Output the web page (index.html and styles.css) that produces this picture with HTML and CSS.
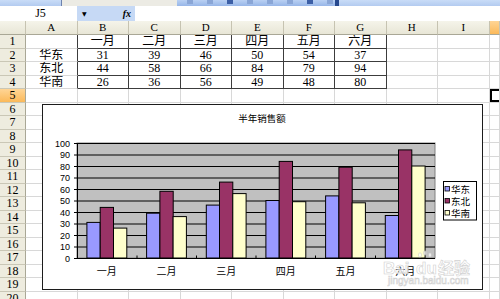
FILE: index.html
```html
<!DOCTYPE html>
<html lang="zh">
<head>
<meta charset="utf-8">
<link rel="stylesheet" href="styles.css">
</head>
<body>
<div class="toolbar">
  <div class="tb-gap"></div>
  <div class="tb-box"></div>
  <div class="tb-icons"><span class="ic"></span><span class="ic"></span><span class="ic dk"></span><span class="ic"></span><span class="ic"></span><span class="ic"></span><span class="ic dk"></span><span class="ic"></span></div>
  <div class="tb-end"></div>
</div>
<div class="formula">
  <div class="namebox">J5</div>
  <div class="fxzone"><span class="arrow">▼</span><span class="fx">fx</span></div>
  <div class="finput"></div>
</div>
<div class="sheet">
  <div class="ch corner"></div><div class="ch">A</div><div class="ch">B</div><div class="ch">C</div><div class="ch">D</div><div class="ch">E</div><div class="ch">F</div><div class="ch">G</div><div class="ch">H</div><div class="ch">I</div><div class="ch sel"></div>

  <div class="rh">1</div><div class="c ta"></div><div class="c t">一月</div><div class="c t">二月</div><div class="c t">三月</div><div class="c t">四月</div><div class="c t">五月</div><div class="c t">六月</div><div class="c"></div><div class="c"></div><div class="c"></div>
  <div class="rh">2</div><div class="c ta">华东</div><div class="c t">31</div><div class="c t">39</div><div class="c t">46</div><div class="c t">50</div><div class="c t">54</div><div class="c t">37</div><div class="c"></div><div class="c"></div><div class="c"></div>
  <div class="rh">3</div><div class="c ta">东北</div><div class="c t">44</div><div class="c t">58</div><div class="c t">66</div><div class="c t">84</div><div class="c t">79</div><div class="c t">94</div><div class="c"></div><div class="c"></div><div class="c"></div>
  <div class="rh">4</div><div class="c ta">华南</div><div class="c t">26</div><div class="c t">36</div><div class="c t">56</div><div class="c t">49</div><div class="c t">48</div><div class="c t">80</div><div class="c"></div><div class="c"></div><div class="c"></div>
  <div class="rh sel">5</div><div class="c"></div><div class="c"></div><div class="c"></div><div class="c"></div><div class="c"></div><div class="c"></div><div class="c"></div><div class="c"></div><div class="c"></div><div class="c cur"></div>
  <div class="rh">6</div><div class="c"></div><div class="c"></div><div class="c"></div><div class="c"></div><div class="c"></div><div class="c"></div><div class="c"></div><div class="c"></div><div class="c"></div><div class="c"></div>
  <div class="rh">7</div><div class="c"></div><div class="c"></div><div class="c"></div><div class="c"></div><div class="c"></div><div class="c"></div><div class="c"></div><div class="c"></div><div class="c"></div><div class="c"></div>
  <div class="rh">8</div><div class="c"></div><div class="c"></div><div class="c"></div><div class="c"></div><div class="c"></div><div class="c"></div><div class="c"></div><div class="c"></div><div class="c"></div><div class="c"></div>
  <div class="rh">9</div><div class="c"></div><div class="c"></div><div class="c"></div><div class="c"></div><div class="c"></div><div class="c"></div><div class="c"></div><div class="c"></div><div class="c"></div><div class="c"></div>
  <div class="rh">10</div><div class="c"></div><div class="c"></div><div class="c"></div><div class="c"></div><div class="c"></div><div class="c"></div><div class="c"></div><div class="c"></div><div class="c"></div><div class="c"></div>
  <div class="rh">11</div><div class="c"></div><div class="c"></div><div class="c"></div><div class="c"></div><div class="c"></div><div class="c"></div><div class="c"></div><div class="c"></div><div class="c"></div><div class="c"></div>
  <div class="rh">12</div><div class="c"></div><div class="c"></div><div class="c"></div><div class="c"></div><div class="c"></div><div class="c"></div><div class="c"></div><div class="c"></div><div class="c"></div><div class="c"></div>
  <div class="rh">13</div><div class="c"></div><div class="c"></div><div class="c"></div><div class="c"></div><div class="c"></div><div class="c"></div><div class="c"></div><div class="c"></div><div class="c"></div><div class="c"></div>
  <div class="rh">14</div><div class="c"></div><div class="c"></div><div class="c"></div><div class="c"></div><div class="c"></div><div class="c"></div><div class="c"></div><div class="c"></div><div class="c"></div><div class="c"></div>
  <div class="rh">15</div><div class="c"></div><div class="c"></div><div class="c"></div><div class="c"></div><div class="c"></div><div class="c"></div><div class="c"></div><div class="c"></div><div class="c"></div><div class="c"></div>
  <div class="rh">16</div><div class="c"></div><div class="c"></div><div class="c"></div><div class="c"></div><div class="c"></div><div class="c"></div><div class="c"></div><div class="c"></div><div class="c"></div><div class="c"></div>
  <div class="rh">17</div><div class="c"></div><div class="c"></div><div class="c"></div><div class="c"></div><div class="c"></div><div class="c"></div><div class="c"></div><div class="c"></div><div class="c"></div><div class="c"></div>
  <div class="rh">18</div><div class="c"></div><div class="c"></div><div class="c"></div><div class="c"></div><div class="c"></div><div class="c"></div><div class="c"></div><div class="c"></div><div class="c"></div><div class="c"></div>
  <div class="rh">19</div><div class="c"></div><div class="c"></div><div class="c"></div><div class="c"></div><div class="c"></div><div class="c"></div><div class="c"></div><div class="c"></div><div class="c"></div><div class="c"></div>
  <div class="rh">20</div><div class="c"></div><div class="c"></div><div class="c"></div><div class="c"></div><div class="c"></div><div class="c"></div><div class="c"></div><div class="c"></div><div class="c"></div><div class="c"></div>
</div>

<div class="chart">
  <svg class="chart-svg" width="439" height="184" viewBox="43 105 439 184" xmlns="http://www.w3.org/2000/svg">
    <text class="title" x="262" y="122" text-anchor="middle">半年销售额</text>
    <rect x="77" y="143" width="358" height="115" fill="#c0c0c0" stroke="#808080" stroke-width="1"/>
    <g stroke="#000" stroke-width="1">
      <line x1="77" y1="143.5" x2="435" y2="143.5"/>
      <line x1="77" y1="155" x2="435" y2="155"/>
      <line x1="77" y1="166.5" x2="435" y2="166.5"/>
      <line x1="77" y1="178" x2="435" y2="178"/>
      <line x1="77" y1="189.5" x2="435" y2="189.5"/>
      <line x1="77" y1="201" x2="435" y2="201"/>
      <line x1="77" y1="212.5" x2="435" y2="212.5"/>
      <line x1="77" y1="224" x2="435" y2="224"/>
      <line x1="77" y1="235.5" x2="435" y2="235.5"/>
      <line x1="77" y1="247" x2="435" y2="247"/>
    </g>
    <g class="ylab" text-anchor="end">
      <text x="70" y="146.5">100</text>
      <text x="70" y="158">90</text>
      <text x="70" y="169.5">80</text>
      <text x="70" y="181">70</text>
      <text x="70" y="192.5">60</text>
      <text x="70" y="204">50</text>
      <text x="70" y="215.5">40</text>
      <text x="70" y="227">30</text>
      <text x="70" y="238.5">20</text>
      <text x="70" y="250">10</text>
      <text x="70" y="261.5">0</text>
    </g>
    <g stroke="#000" stroke-width="1">
      <rect x="86.9" y="222.4" width="13.3" height="35.6" fill="#9999ff"/>
      <rect x="100.2" y="207.4" width="13.3" height="50.6" fill="#993366"/>
      <rect x="113.5" y="228.1" width="13.3" height="29.9" fill="#ffffcc"/>

      <rect x="146.6" y="213.2" width="13.3" height="44.8" fill="#9999ff"/>
      <rect x="159.9" y="191.3" width="13.3" height="66.7" fill="#993366"/>
      <rect x="173.1" y="216.6" width="13.3" height="41.4" fill="#ffffcc"/>

      <rect x="206.3" y="205.1" width="13.3" height="52.9" fill="#9999ff"/>
      <rect x="219.5" y="182.1" width="13.3" height="75.9" fill="#993366"/>
      <rect x="232.8" y="193.6" width="13.3" height="64.4" fill="#ffffcc"/>

      <rect x="265.9" y="200.5" width="13.3" height="57.5" fill="#9999ff"/>
      <rect x="279.2" y="161.4" width="13.3" height="96.6" fill="#993366"/>
      <rect x="292.5" y="201.7" width="13.3" height="56.3" fill="#ffffcc"/>

      <rect x="325.6" y="195.9" width="13.3" height="62.1" fill="#9999ff"/>
      <rect x="338.9" y="167.2" width="13.3" height="90.8" fill="#993366"/>
      <rect x="352.1" y="202.8" width="13.3" height="55.2" fill="#ffffcc"/>

      <rect x="385.3" y="215.5" width="13.3" height="42.5" fill="#9999ff"/>
      <rect x="398.5" y="149.9" width="13.3" height="108.1" fill="#993366"/>
      <rect x="411.8" y="166" width="13.3" height="92" fill="#ffffcc"/>
    </g>
    <g stroke="#000" stroke-width="1">
      <line x1="77.5" y1="143" x2="77.5" y2="258.5"/>
      <line x1="77" y1="258.5" x2="435" y2="258.5"/>
      <line x1="74" y1="143.5" x2="77" y2="143.5"/>
      <line x1="74" y1="155" x2="77" y2="155"/>
      <line x1="74" y1="166.5" x2="77" y2="166.5"/>
      <line x1="74" y1="178" x2="77" y2="178"/>
      <line x1="74" y1="189.5" x2="77" y2="189.5"/>
      <line x1="74" y1="201" x2="77" y2="201"/>
      <line x1="74" y1="212.5" x2="77" y2="212.5"/>
      <line x1="74" y1="224" x2="77" y2="224"/>
      <line x1="74" y1="235.5" x2="77" y2="235.5"/>
      <line x1="74" y1="247" x2="77" y2="247"/>
      <line x1="74" y1="258.5" x2="77" y2="258.5"/>
      <line x1="137" y1="255.5" x2="137" y2="258"/>
      <line x1="196.5" y1="255.5" x2="196.5" y2="258"/>
      <line x1="256" y1="255.5" x2="256" y2="258"/>
      <line x1="315.5" y1="255.5" x2="315.5" y2="258"/>
      <line x1="375.5" y1="255.5" x2="375.5" y2="258"/>
    </g>
    <g class="xlab" text-anchor="middle">
      <text x="106.8" y="275">一月</text>
      <text x="166.5" y="275">二月</text>
      <text x="226.2" y="275">三月</text>
      <text x="285.8" y="275">四月</text>
      <text x="345.5" y="275">五月</text>
      <text x="405.2" y="275">六月</text>
    </g>
    <rect x="443.5" y="181.5" width="33" height="38.5" fill="#fff" stroke="#000" stroke-width="1"/>
    <g stroke="#000" stroke-width="0.8">
      <rect x="445" y="186.5" width="4.5" height="4.5" fill="#9999ff"/>
      <rect x="445" y="198.5" width="4.5" height="4.5" fill="#993366"/>
      <rect x="445" y="210.5" width="4.5" height="4.5" fill="#ffffcc"/>
    </g>
    <g class="leg">
      <text x="451" y="192.5">华东</text>
      <text x="451" y="204.5">东北</text>
      <text x="451" y="216.5">华南</text>
    </g>
    <g class="wm">
      <text class="wm-big" x="383" y="274">Bai</text>
      <text class="wm-big" x="416" y="274">du</text>
      <text class="wm-cn" x="438" y="274">经验</text>
      <text class="wm-small" x="388" y="284">jingyan.baidu.com</text>
    </g>
    <g fill="#ffffff" stroke="#c0c0c0" stroke-width="0.6" opacity="0.7">
      <ellipse cx="420" cy="255" rx="1.6" ry="2.2"/>
      <ellipse cx="425" cy="253" rx="1.6" ry="2.2"/>
      <ellipse cx="430" cy="255" rx="1.6" ry="2.2"/>
    </g>
  </svg>
</div>
</body>
</html>
```

FILE: styles.css
```css
html, body {
  margin: 0;
  padding: 0;
}

body {
  width: 500px;
  height: 299px;
  overflow: hidden;
  position: relative;
  background: #ffffff;
  font-family: "Liberation Serif", "Noto Sans CJK SC", serif;
  color: #000;
}

/* top toolbar strip */
.toolbar {
  display: flex;
  height: 6px;
  background: linear-gradient(#c9dcf7, #b3cbf0);
}
.tb-gap { width: 61px; }
.tb-box {
  width: 116px;
  background: #ecebe4;
  border-left: 1px solid #6d82ad;
  box-sizing: border-box;
}
.tb-icons {
  width: 158px;
  background: linear-gradient(#b9d0f3, #97b6e8);
  display: flex;
  align-items: flex-start;
  gap: 14px;
  padding-left: 10px;
  box-sizing: border-box;
}
.ic {
  width: 6px;
  height: 4px;
  background: #8aa6d6;
}
.ic.dk { background: #3c5fa6; }
.tb-end {
  width: 4px;
  background: #27498e;
}

/* formula bar */
.formula {
  display: flex;
  height: 15px;
  background: #fff;
}
.namebox {
  width: 77px;
  text-align: center;
  font-size: 12px;
  line-height: 15px;
  padding-left: 4px;
  box-sizing: border-box;
}
.fxzone {
  width: 58px;
  background: #c6d9f5;
  display: flex;
  justify-content: space-between;
  align-items: center;
  padding: 0 4px 0 5px;
  box-sizing: border-box;
}
.arrow {
  font-family: "DejaVu Sans", sans-serif;
  font-size: 6px;
  line-height: 6px;
}
.fx {
  font-family: "Liberation Serif", serif;
  font-style: italic;
  font-weight: bold;
  font-size: 10px;
}
.finput { flex: 1; }

/* sheet grid */
.sheet {
  display: grid;
  grid-template-columns: 26px repeat(9, 51.5px) 1fr;
  grid-template-rows: 14px;
  grid-auto-rows: 13.5px;
}
.sheet > div {
  box-sizing: border-box;
  overflow: hidden;
  white-space: nowrap;
}
.ch {
  background: linear-gradient(#f5f4ea, #e8e6d6);
  border-right: 1px solid #c6c3b1;
  border-bottom: 1px solid #a9a796;
  text-align: center;
  font-size: 11px;
  line-height: 13px;
}
.rh {
  background: #eeecdf;
  border-right: 1px solid #a9a796;
  border-bottom: 1px solid #cac7b6;
  text-align: center;
  font-size: 12px;
  line-height: 13px;
}
.c {
  border-right: 1px solid #d8d8d8;
  border-bottom: 1px solid #d8d8d8;
  text-align: center;
  font-size: 12px;
  line-height: 13px;
}
.t {
  border-color: #3c3c3c;
}
.ta {
  border-right-color: #3c3c3c;
}
.sel {
  background: linear-gradient(#ffd595, #fbb95a);
}
.cur {
  box-shadow: inset 2px 2px 0 #000, inset 0 -2px 0 #000;
}

/* floating chart object */
.chart {
  position: absolute;
  left: 42px;
  top: 104px;
  width: 439px;
  height: 184px;
  border: 1px solid #1c1c1c;
  background: #fff;
}
.chart-svg {
  display: block;
}
.title {
  font-family: "Noto Sans CJK SC", sans-serif;
  font-size: 9.5px;
  fill: #000;
}
.ylab text {
  font-family: "Liberation Sans", sans-serif;
  font-size: 9px;
  fill: #000;
}
.xlab text {
  font-family: "Noto Sans CJK SC", sans-serif;
  font-size: 10px;
  fill: #000;
}
.leg text {
  font-family: "Noto Sans CJK SC", sans-serif;
  font-size: 9.5px;
  fill: #000;
}
.wm text {
  fill: #ffffff;
  stroke: #c2c2c2;
  stroke-width: 0.6;
  opacity: 0.75;
}
.wm-big {
  font-family: "Liberation Sans", sans-serif;
  font-weight: bold;
  font-size: 17px;
}
.wm-cn {
  font-family: "Noto Sans CJK SC", sans-serif;
  font-weight: bold;
  font-size: 16px;
}
.wm-small {
  font-family: "Liberation Sans", sans-serif;
  font-size: 10px;
  stroke-width: 0.4;
}
```
